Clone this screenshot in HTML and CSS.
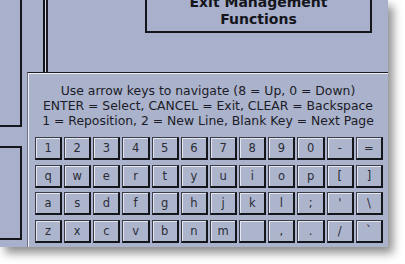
FILE: index.html
```html
<!DOCTYPE html>
<html>
    <head>
        <link rel="stylesheet" href="styles.css">
    </head>
    <body>
        <div class="screen">
            <!--windows behind the keyboard-->
            <div class="desk">
                <div class="side">
                    <div class="side-box top"></div>
                    <div class="side-box bottom"></div>
                </div>
                <div class="divider"></div>
                <div class="title-box">Exit Management<br>Functions</div>
            </div>

            <!--keyboard dialog-->
            <div class="dialog">
                <div class="help">
                    Use arrow keys to navigate (8 = Up, 0 = Down)<br>
                    ENTER = Select, CANCEL = Exit, CLEAR = Backspace<br>
                    1 = Reposition, 2 = New Line, Blank Key = Next Page
                </div>
                <div class="keys" id="keys"></div>
            </div>
        </div>
        <script>
            var rows = [
                ['1','2','3','4','5','6','7','8','9','0','-','='],
                ['q','w','e','r','t','y','u','i','o','p','[',']'],
                ['a','s','d','f','g','h','j','k','l',';','\'','\\'],
                ['z','x','c','v','b','n','m','',',','.','/','`']
            ];
            var keys = document.getElementById("keys");
            for(var i = 0; i < rows.length; i++) {
                for(var j = 0; j < rows[i].length; j++) {
                    var k = document.createElement("div");
                    k.className = "key";
                    k.textContent = rows[i][j];
                    keys.appendChild(k);
                }
            }
        </script>
    </body>
</html>
```

FILE: styles.css
```css
body {
    margin: 0px;
    background-color: white;
    width: 405px;
    height: 264px;
    overflow: hidden;
}
.screen {
    position: relative;
    width: 388px;
    height: 247px;
    overflow: hidden;
    background-color: #a8b0cb;
    box-shadow: 5px 6px 9px rgba(0, 0, 0, 0.45);
}
.desk {
    display: flex;
    align-items: flex-start;
    height: 100%;
}
.side {
    width: 22px;
    flex-shrink: 0;
}
.side-box {
    border-right: 2px solid #15161c;
    border-bottom: 2px solid #15161c;
}
.side-box.top {
    height: 125px;
}
.side-box.bottom {
    height: 90px;
    margin-top: 19px;
    border-top: 2px solid #15161c;
}
.divider {
    margin-left: 21px;
    width: 1px;
    height: 100%;
    flex-shrink: 0;
    background-color: #d6dae6;
    border-left: 2px solid #121318;
    border-right: 2px solid #1c1d24;
}
.title-box {
    margin-left: 97px;
    margin-top: -6px;
    width: 223px;
    padding-bottom: 3px;
    border: 2px solid #15161c;
    border-top: none;
    font-family: "DejaVu Sans", sans-serif;
    font-weight: bold;
    font-size: 14px;
    line-height: 17px;
    text-align: center;
    color: #15161c;
}
.dialog {
    position: absolute;
    left: 27px;
    top: 72px;
    right: 0px;
    bottom: 0px;
    background-color: #aab2cc;
    border-top: 1px solid #1a1b22;
    border-left: 1px solid #6c7288;
    box-shadow: inset 1px 1px 0px #eef0f6;
}
.help {
    padding-top: 10px;
    font-family: "DejaVu Sans", sans-serif;
    font-size: 12.4px;
    line-height: 15px;
    text-align: center;
    color: #1b1c26;
}
.keys {
    display: grid;
    grid-template-columns: repeat(12, 1fr);
    grid-auto-rows: 23px;
    column-gap: 2px;
    row-gap: 4.7px;
    width: 348px;
    margin-top: 9px;
    margin-left: 7px;
}
.key {
    box-sizing: border-box;
    border-top: 1px solid #3a3c48;
    border-left: 1px solid #3a3c48;
    border-right: 2px solid #15161c;
    border-bottom: 2px solid #15161c;
    box-shadow: inset 1px 1px 0px #e4e7f0;
    background-color: #adb5cd;
    font-family: "DejaVu Sans", sans-serif;
    font-size: 11.5px;
    line-height: 20px;
    text-align: center;
    color: #2a2c36;
}
```
